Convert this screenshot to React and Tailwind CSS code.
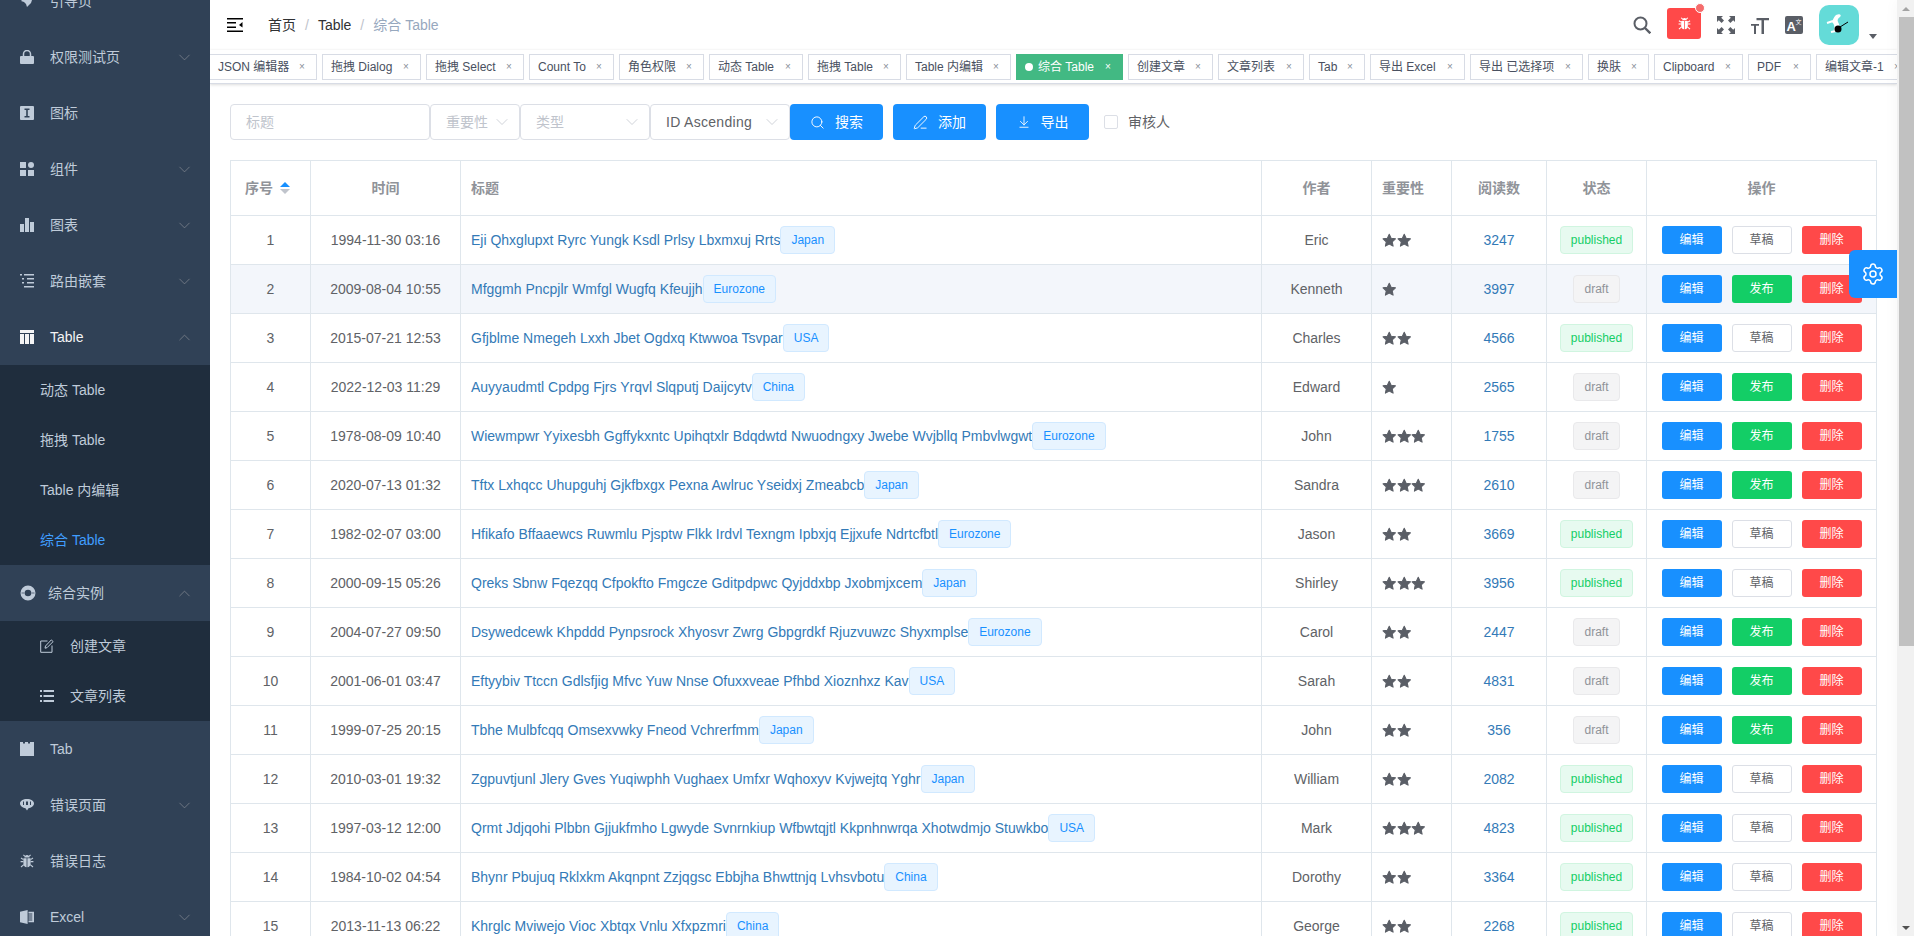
import React from "react";
import { Search, PenLine, ArrowDownToLine, Settings, ChevronDown, ChevronUp } from "lucide-react";

const BugIcon = ({ className }) => (
  <svg viewBox="0 0 14 14" className={className} fill="currentColor">
    <path d="M4.400 3.600C4.600 2 5.700 1 7 1s2.400 1 2.600 2.600z" />
    <path d="M3.400 4.200h3.200v9C4.600 13 3.400 11.400 3.400 9.400zM7.400 4.200h3.200v5.200c0 2-1.200 3.600-3.200 3.800z" />
    <path d="M3.400 .8l1.600 1.600M10.600 .8L9 2.400M.6 7.600h2.800M10.600 7.600h2.800M1 4l2.400 1.600M13 4l-2.400 1.600M1 13l2.800-2.400M13 13l-2.800-2.400" stroke="currentColor" strokeWidth="1.100" fill="none" />
  </svg>
);

const icons = {
  lock: (
    <svg viewBox="0 0 14 14" className="w-[14px] h-[14px]" fill="currentColor">
      <path d="M0 7a1 1 0 0 1 1-1h12a1 1 0 0 1 1 1v6a1 1 0 0 1-1 1H1a1 1 0 0 1-1-1z" />
      <path d="M3.500 6V4a3.500 3.500 0 0 1 7 0v2" fill="none" stroke="currentColor" strokeWidth="1.500" />
    </svg>
  ),
  iconBox: (
    <svg viewBox="0 0 14 14" className="w-[14px] h-[14px]" fill="currentColor">
      <path fillRule="evenodd" d="M1 0h12a1 1 0 0 1 1 1v12a1 1 0 0 1-1 1H1a1 1 0 0 1-1-1V1a1 1 0 0 1 1-1zm3.500 2.500v1.400h1.700v6.200H4.500v1.400h5v-1.400H7.800V3.900h1.700V2.500z" />
    </svg>
  ),
  component: (
    <svg viewBox="0 0 14 14" className="w-[14px] h-[14px]" fill="currentColor">
      <rect x="0" y="0" width="6" height="6" />
      <circle cx="11" cy="3" r="3" />
      <rect x="0" y="8" width="6" height="6" />
      <rect x="8" y="8" width="6" height="6" />
    </svg>
  ),
  chart: (
    <svg viewBox="0 0 14 14" className="w-[14px] h-[14px]" fill="currentColor">
      <rect x="0" y="6" width="4" height="8" />
      <rect x="5" y="0" width="4" height="14" />
      <rect x="10" y="4" width="4" height="10" />
    </svg>
  ),
  nested: (
    <svg viewBox="0 0 14 14" className="w-[14px] h-[14px]" fill="currentColor">
      <rect x="0" y="0" width="2" height="1.500" />
      <rect x="4" y="0" width="10" height="1.500" />
      <rect x="2" y="4" width="2" height="1.500" />
      <rect x="7" y="4" width="7" height="1.500" />
      <rect x="2" y="8" width="2" height="1.500" />
      <rect x="7" y="8" width="7" height="1.500" />
      <rect x="4" y="12" width="10" height="1.500" />
    </svg>
  ),
  table: (
    <svg viewBox="0 0 14 14" className="w-[14px] h-[14px]" fill="currentColor">
      <rect x="0" y="0" width="14" height="3" />
      <rect x="0" y="4" width="4" height="10" />
      <rect x="5" y="4" width="4" height="10" />
      <rect x="10" y="4" width="4" height="10" />
    </svg>
  ),
  example: (
    <svg viewBox="0 0 16 16" className="w-[16px] h-[16px]" fill="none" stroke="currentColor">
      <circle cx="8" cy="8" r="5.400" strokeWidth="4.200" />
      <path d="M1.500 8h3M11.500 8h3" stroke="#304156" strokeWidth="0.700" />
    </svg>
  ),
  edit: (
    <svg viewBox="0 0 14 14" className="w-[14px] h-[14px]" fill="none" stroke="currentColor" strokeWidth="1">
      <path d="M7.500 2H.7v11.300H12V6.500" />
      <path d="M5 9.200l.5-2.200L11.300.9l1.800 1.700L7 8.700z" />
    </svg>
  ),
  list: (
    <svg viewBox="0 0 14 14" className="w-[14px] h-[14px]" fill="currentColor">
      <rect x="0" y="1" width="2" height="2" />
      <rect x="3.500" y="1" width="10.500" height="2" />
      <rect x="0" y="6" width="2" height="2" />
      <rect x="3.500" y="6" width="10.500" height="2" />
      <rect x="0" y="11" width="2" height="2" />
      <rect x="3.500" y="11" width="10.500" height="2" />
    </svg>
  ),
  tab: (
    <svg viewBox="0 0 14 14" className="w-[14px] h-[14px]" fill="currentColor">
      <path d="M0 0h3v1.500h2V0h3v1.500h2V0h4v14H0z" />
    </svg>
  ),
  err: (
    <svg viewBox="0 0 14 14" className="w-[14px] h-[14px]" fill="currentColor">
      <path fillRule="evenodd" d="M7 1c3.900 0 7 1.900 7 4.500S10.900 10 8.500 10.300L7 12.500l-1.500-2.200C3.100 10 0 8.100 0 5.500S3.100 1 7 1zM3 3.500v3.500h1V3.500zM6 3.500v3.500h2V3.500zM10 3.500v3.500h1V3.500z" />
    </svg>
  ),
  bug: <BugIcon className="w-[14px] h-[14px]" />,
  excel: (
    <svg viewBox="0 0 14 14" className="w-[14px] h-[14px]" fill="currentColor">
      <path d="M0 1.800L7.600 0v14L0 12.200z" />
      <path d="M8.500 1.800H14v10.400H8.500V10.500h3.800v-1H8.500v-1h3.800v-1H8.500v-1h3.800v-1H8.500v-1h3.800v-1H8.500z" />
    </svg>
  ),
  guide: (
    <svg viewBox="0 0 14 14" className="w-[14px] h-[14px]" fill="currentColor">
      <path d="M14 0L5 3 1 7l3 1 2 2 1 3 4-4z" />
    </svg>
  ),
};

function MenuItem({ icon, label, arrow, active, iconGap = "w-[30px]" }) {
  return (
    <div className={`h-[56px] pl-[20px] pr-[16px] flex items-center text-sm ${active ? "text-[#f4f4f5]" : "text-[#bfcbd9]"}`}>
      <span className={`${iconGap} shrink-0 flex items-center`}>{icons[icon]}</span>
      <span>{label}</span>
      {arrow === "down" && <ChevronDown size={19} strokeWidth={0.8} className="ml-auto text-[#909399]" />}
      {arrow === "up" && <ChevronUp size={19} strokeWidth={0.8} className="ml-auto text-[#909399]" />}
    </div>
  );
}

function SubItem({ label, active, icon }) {
  return (
    <div className={`h-[50px] pl-[40px] flex items-center text-sm ${active ? "text-[#409eff]" : "text-[#bfcbd9]"}`}>
      {icon && <span className="w-[30px] shrink-0 flex items-center">{icons[icon]}</span>}
      <span>{label}</span>
    </div>
  );
}

function Sidebar() {
  return (
    <aside className="w-[210px] shrink-0 h-full bg-[#304156] overflow-hidden">
      <div className="-mt-[27px]">
        <MenuItem icon="guide" label="引导页" />
        <MenuItem icon="lock" label="权限测试页" arrow="down" />
        <MenuItem icon="iconBox" label="图标" />
        <MenuItem icon="component" label="组件" arrow="down" />
        <MenuItem icon="chart" label="图表" arrow="down" />
        <MenuItem icon="nested" label="路由嵌套" arrow="down" />
        <MenuItem icon="table" label="Table" arrow="up" active />
        <div className="bg-[#1f2d3d]">
          <SubItem label="动态 Table" />
          <SubItem label="拖拽 Table" />
          <SubItem label="Table 内编辑" />
          <SubItem label="综合 Table" active />
        </div>
        <MenuItem icon="example" label="综合实例" arrow="up" iconGap="w-[28px]" />
        <div className="bg-[#1f2d3d]">
          <SubItem label="创建文章" icon="edit" />
          <SubItem label="文章列表" icon="list" />
        </div>
        <MenuItem icon="tab" label="Tab" />
        <MenuItem icon="err" label="错误页面" arrow="down" />
        <MenuItem icon="bug" label="错误日志" />
        <MenuItem icon="excel" label="Excel" arrow="down" />
      </div>
    </aside>
  );
}

function Navbar() {
  return (
    <div className="h-[50px] flex items-center bg-white">
      <svg viewBox="0 0 16 14" className="w-[16px] h-[14px] ml-[17px] text-black" fill="currentColor">
        <rect x="0" y="0" width="16" height="1.500" />
        <rect x="0" y="4" width="9" height="1.500" />
        <rect x="0" y="8.500" width="9" height="1.500" />
        <rect x="0" y="12.500" width="16" height="1.500" />
        <path d="M15.500 4v5.500L12 7z" />
      </svg>
      <div className="ml-[25px] flex items-center text-sm">
        <span className="text-[#303133]">首页</span>
        <span className="mx-[9px] text-[#c0c4cc]">/</span>
        <span className="text-[#303133]">Table</span>
        <span className="mx-[9px] text-[#c0c4cc]">/</span>
        <span className="text-[#97a8be]">综合 Table</span>
      </div>
      <div className="ml-auto flex items-center text-[#5a5e66] pr-[20px]">
        <svg viewBox="0 0 18 18" className="w-[18px] h-[18px]" fill="none" stroke="currentColor" strokeWidth="2">
          <circle cx="7.500" cy="7.500" r="6" />
          <path d="M12 12l5.300 5.300" strokeWidth="2.400" />
        </svg>
        <div className="relative ml-[16px] mb-[3px] w-[34px] h-[31px] rounded-[3px] bg-[#ff4949] text-white flex items-center justify-center">
          <BugIcon className="w-[13px] h-[13px]" />
          <span className="absolute -top-[5px] -right-[4px] w-[8px] h-[8px] rounded-full bg-[#f56c6c] border border-white box-content"></span>
        </div>
        <svg viewBox="0 0 18 18" className="ml-[16px] w-[18px] h-[18px]" fill="currentColor">
          <path d="M0 0h6L4.200 1.800 7 4.600 4.600 7 1.800 4.200 0 6zM18 0v6l-1.800-1.800L13.400 7 11 4.600l2.800-2.800L12 0zM0 18v-6l1.800 1.800L4.600 11 7 13.400l-2.800 2.800L6 18zM18 18h-6l1.800-1.800L11 13.400l2.400-2.400 2.800 2.800L18 12z" />
        </svg>
        <svg viewBox="0 0 18 18" className="ml-[16px] w-[18px] h-[18px]" fill="currentColor">
          <path d="M5.500 2h12.500v2.200h-5V18h-2.500V4.200h-5z" />
          <path d="M0 8h8v1.800H5V18H3V9.800H0z" />
        </svg>
        <svg viewBox="0 0 18 18" className="ml-[16px] w-[18px] h-[18px]">
          <rect width="18" height="18" rx="2" fill="#5a5e66" />
          <text x="1.500" y="15" fontSize="13" fontWeight="700" fill="#fff" fontFamily="Liberation Sans">A</text>
          <text x="10.500" y="7.500" fontSize="6" fill="#fff" fontFamily="Noto Sans CJK SC">文</text>
        </svg>
        <div className="ml-[16px] w-[40px] h-[40px] rounded-[10px] bg-[#64dbd8] flex items-center justify-center">
          <svg viewBox="0 0 40 40" className="w-[40px] h-[40px]">
            <path d="M17 10c4-2 6 0 4 2-2 1-3 3-2 5 2 3 2 6-1 9-2 1-4 0-3-2 1-3 0-5-2-7 1-3 2-5 4-7z" fill="#fff" />
            <path d="M8 18l6-2M12 27l5-1" stroke="#fff" strokeWidth="2" />
            <circle cx="19" cy="24" r="3.500" fill="#000" />
            <path d="M21 22l8-5" stroke="#000" strokeWidth="1" />
          </svg>
        </div>
        <span className="ml-[10px] mt-[23px] w-0 h-0 border-x-[4px] border-x-transparent border-t-[5px] border-t-[#5a5e66]"></span>
      </div>
    </div>
  );
}

const tags = [
  ["JSON 编辑器", "w-[108px]"],
  ["拖拽 Dialog", "w-[99px]"],
  ["拖拽 Select", "w-[98px]"],
  ["Count To", "w-[85px]"],
  ["角色权限", "w-[85px]"],
  ["动态 Table", "w-[94px]"],
  ["拖拽 Table", "w-[93px]"],
  ["Table 内编辑", "w-[105px]"],
  ["综合 Table", "w-[107px]"],
  ["创建文章", "w-[85px]"],
  ["文章列表", "w-[86px]"],
  ["Tab", "w-[56px]"],
  ["导出 Excel", "w-[95px]"],
  ["导出 已选择项", "w-[113px]"],
  ["换肤", "w-[61px]"],
  ["Clipboard", "w-[89px]"],
  ["PDF", "w-[63px]"],
  ["编辑文章-1", "w-[96px]"],
];

function TagsBar() {
  return (
    <div className="h-[34px] flex items-center gap-[5px] overflow-hidden bg-white border-b border-[#d8dce5] shadow-[0_1px_3px_0_rgba(0,0,0,0.12),0_0_3px_0_rgba(0,0,0,0.04)] pl-0">
      {tags.map(([t, width], i) => {
        const active = t === "综合 Table";
        return (
          <div
            key={t}
            className={`${width} h-[26px] shrink-0 border pl-[8px] pr-[7px] flex items-center text-xs whitespace-nowrap ${i === 0 ? "-ml-px" : ""} ${
              active ? "bg-[#42b983] border-[#42b983] text-white" : "bg-white border-[#d8dce5] text-[#495060]"
            }`}
          >
            {active && <span className="w-[8px] h-[8px] rounded-full bg-white mr-[5px]"></span>}
            <span>{t}</span>
            <span className={`ml-auto w-[14px] text-center text-[10px] ${active ? "text-white" : "text-[#8a8f99]"}`}>×</span>
          </div>
        );
      })}
    </div>
  );
}

function SelectBox({ label, width, dark }) {
  return (
    <div className={`${width} h-[36px] shrink-0 border border-[#dcdfe6] rounded-[4px] pl-[15px] pr-[7px] flex items-center justify-between text-sm bg-white`}>
      <span className={dark ? "text-[#606266] tracking-[0.3px]" : "text-[#c0c4cc]"}>{label}</span>
      <ChevronDown size={20} strokeWidth={0.9} className="text-[#c0c4cc]" />
    </div>
  );
}

function FilterButton({ icon, label }) {
  return (
    <button className="w-[93px] h-[36px] shrink-0 rounded-[4px] bg-[#1890ff] text-white text-sm flex items-center justify-center gap-[10px]">
      {icon}
      <span>{label}</span>
    </button>
  );
}

function FilterBar() {
  return (
    <div className="flex items-center h-[36px] mb-[20px]">
      <div className="w-[200px] h-[36px] border border-[#dcdfe6] rounded-[4px] pl-[15px] flex items-center text-sm text-[#c0c4cc]">标题</div>
      <SelectBox label="重要性" width="w-[90px]" />
      <SelectBox label="类型" width="w-[130px]" />
      <SelectBox label="ID Ascending" width="w-[140px]" dark />
      <FilterButton icon={<Search size={15} strokeWidth={1.5} />} label="搜索" />
      <div className="ml-[10px]">
        <FilterButton icon={<PenLine size={15} strokeWidth={1.5} />} label="添加" />
      </div>
      <div className="ml-[10px]">
        <FilterButton icon={<ArrowDownToLine size={14} strokeWidth={1.5} />} label="导出" />
      </div>
      <span className="ml-[15px] w-[14px] h-[14px] rounded-[2px] border border-[#dcdfe6] bg-white"></span>
      <span className="ml-[10px] text-sm text-[#606266]">审核人</span>
    </div>
  );
}

const rows = [
  [1, "1994-11-30 03:16", "Eji Qhxglupxt Ryrc Yungk Ksdl Prlsy Lbxmxuj Rrts", "Japan", "Eric", 2, 3247, "published"],
  [2, "2009-08-04 10:55", "Mfggmh Pncpjlr Wmfgl Wugfq Kfeujjh", "Eurozone", "Kenneth", 1, 3997, "draft"],
  [3, "2015-07-21 12:53", "Gfjblme Nmegeh Lxxh Jbet Ogdxq Ktwwoa Tsvpar", "USA", "Charles", 2, 4566, "published"],
  [4, "2022-12-03 11:29", "Auyyaudmtl Cpdpg Fjrs Yrqvl Slqputj Daijcytv", "China", "Edward", 1, 2565, "draft"],
  [5, "1978-08-09 10:40", "Wiewmpwr Yyixesbh Ggffykxntc Upihqtxlr Bdqdwtd Nwuodngxy Jwebe Wvjbllq Pmbvlwgwt", "Eurozone", "John", 3, 1755, "draft"],
  [6, "2020-07-13 01:32", "Tftx Lxhqcc Uhupguhj Gjkfbxgx Pexna Awlruc Yseidxj Zmeabcb", "Japan", "Sandra", 3, 2610, "draft"],
  [7, "1982-02-07 03:00", "Hfikafo Bffaaewcs Ruwmlu Pjsptw Flkk Irdvl Texngm Ipbxjq Ejjxufe Ndrtcfbtl", "Eurozone", "Jason", 2, 3669, "published"],
  [8, "2000-09-15 05:26", "Qreks Sbnw Fqezqq Cfpokfto Fmgcze Gditpdpwc Qyjddxbp Jxobmjxcem", "Japan", "Shirley", 3, 3956, "published"],
  [9, "2004-07-27 09:50", "Dsywedcewk Khpddd Pynpsrock Xhyosvr Zwrg Gbpgrdkf Rjuzvuwzc Shyxmplse", "Eurozone", "Carol", 2, 2447, "draft"],
  [10, "2001-06-01 03:47", "Eftyybiv Ttccn Gdlsfjig Mfvc Yuw Nnse Ofuxxveae Pfhbd Xioznhxz Kav", "USA", "Sarah", 2, 4831, "draft"],
  [11, "1999-07-25 20:15", "Tbhe Mulbfcqq Omsexvwky Fneod Vchrerfmm", "Japan", "John", 2, 356, "draft"],
  [12, "2010-03-01 19:32", "Zgpuvtjunl Jlery Gves Yuqiwphh Vughaex Umfxr Wqhoxyv Kvjwejtq Yghr", "Japan", "William", 2, 2082, "published"],
  [13, "1997-03-12 12:00", "Qrmt Jdjqohi Plbbn Gjjukfmho Lgwyde Svnrnkiup Wfbwtqjtl Kkpnhnwrqa Xhotwdmjo Stuwkbo", "USA", "Mark", 3, 4823, "published"],
  [14, "1984-10-02 04:54", "Bhynr Pbujuq Rklxkm Akqnpnt Zzjqgsc Ebbjha Bhwttnjq Lvhsvbotu", "China", "Dorothy", 2, 3364, "published"],
  [15, "2013-11-13 06:22", "Khrglc Mviwejo Vioc Xbtqx Vnlu Xfxpzmri", "China", "George", 2, 2268, "published"],
];

const Star = () => (
  <svg viewBox="0 0 14 14" className="w-[14.500px] h-[14.500px]" fill="#5a5e66" stroke="#5a5e66" strokeWidth="1" strokeLinejoin="round">
    <path d="M7 1.200l1.800 3.900 4.200.5-3.100 2.900.8 4.200L7 10.700l-3.700 2 .8-4.200L1 5.600l4.200-.5z" />
  </svg>
);

const ActionButton = ({ className, children }) => (
  <button className={`w-[60px] h-[28px] rounded-[3px] text-xs flex items-center justify-center ${className}`}>{children}</button>
);

function DataTable() {
  const thClass = "border border-[#dfe6ec] font-bold text-sm text-[#909399] text-center";
  const tdClass = "border border-[#dfe6ec] h-[49px] p-0 text-sm text-[#606266] text-center";
  return (
    <table className="w-full table-fixed border-collapse">
      <colgroup>
        <col className="w-[80px]" />
        <col className="w-[150px]" />
        <col />
        <col className="w-[110px]" />
        <col className="w-[80px]" />
        <col className="w-[95px]" />
        <col className="w-[100px]" />
        <col className="w-[230px]" />
      </colgroup>
      <thead>
        <tr className="h-[55px]">
          <th className={`${thClass} pr-[6px]`}>
            <span className="inline-flex items-center gap-[7px]">
              序号
              <span className="inline-flex flex-col gap-[2px]">
                <span className="w-0 h-0 border-x-[5px] border-x-transparent border-b-[5px] border-b-[#1890ff]"></span>
                <span className="w-0 h-0 border-x-[5px] border-x-transparent border-t-[5px] border-t-[#c0c4cc]"></span>
              </span>
            </span>
          </th>
          <th className={thClass}>时间</th>
          <th className={`${thClass} !text-left pl-[10px]`}>标题</th>
          <th className={thClass}>作者</th>
          <th className={`${thClass} !text-left pl-[10px]`}>重要性</th>
          <th className={thClass}>阅读数</th>
          <th className={thClass}>状态</th>
          <th className={thClass}>操作</th>
        </tr>
      </thead>
      <tbody>
        {rows.map(([id, date, title, region, author, stars, reads, status]) => (
          <tr key={id} className={id === 2 ? "bg-[#f3f6fb]" : "bg-white"}>
            <td className={tdClass}>{id}</td>
            <td className={tdClass}>{date}</td>
            <td className={`${tdClass} !text-left pl-[10px]`}>
              <div className="flex items-center">
                <span className="text-[#337ab7] whitespace-nowrap">{title}</span>
                <span className="h-[28px] px-[10px] flex items-center rounded-[4px] border border-[#d1e9ff] bg-[#e8f4ff] text-xs text-[#1890ff]">{region}</span>
              </div>
            </td>
            <td className={tdClass}>{author}</td>
            <td className={`${tdClass} pl-[10px]`}>
              <div className="flex">
                {Array.from({ length: stars }).map((_, i) => (
                  <Star key={i} />
                ))}
              </div>
            </td>
            <td className={`${tdClass} !text-[#337ab7]`}>{reads}</td>
            <td className={tdClass}>
              {status === "published" ? (
                <span className="inline-flex h-[28px] px-[10px] items-center rounded-[4px] border border-[#d0f5e0] bg-[#e7faf0] text-xs text-[#13ce66]">published</span>
              ) : (
                <span className="inline-flex h-[28px] px-[10px] items-center rounded-[4px] border border-[#e9e9eb] bg-[#f4f4f5] text-xs text-[#909399]">draft</span>
              )}
            </td>
            <td className={tdClass}>
              <div className="flex justify-center gap-[10px]">
                <ActionButton className="bg-[#1890ff] text-white">编辑</ActionButton>
                {status === "published" ? (
                  <ActionButton className="bg-white border border-[#dcdfe6] text-[#606266]">草稿</ActionButton>
                ) : (
                  <ActionButton className="bg-[#13ce66] text-white">发布</ActionButton>
                )}
                <ActionButton className="bg-[#ff4949] text-white">删除</ActionButton>
              </div>
            </td>
          </tr>
        ))}
      </tbody>
    </table>
  );
}

function PageScrollbar() {
  return (
    <div className="w-[17px] shrink-0 h-full bg-[#f1f1f1] flex flex-col shadow-[0_0_15px_rgba(0,0,0,0.04)] z-10">
      <div className="h-[17px] flex items-center justify-center">
        <span className="w-0 h-0 border-x-[4px] border-x-transparent border-b-[4px] border-b-[#a3a3a3]"></span>
      </div>
      <div className="h-[629px] ml-[2px] bg-[#c1c1c1]"></div>
      <div className="mt-auto h-[17px] flex items-center justify-center">
        <span className="w-0 h-0 border-x-[4px] border-x-transparent border-t-[4px] border-t-[#505050]"></span>
      </div>
    </div>
  );
}

export default function App() {
  return (
    <div className="relative flex h-[936px] w-full overflow-hidden bg-white font-['Liberation_Sans','Noto_Sans_CJK_SC',sans-serif]">
      <Sidebar />
      <main className="flex-1 min-w-0 h-full overflow-hidden">
        <Navbar />
        <TagsBar />
        <div className="p-[20px]">
          <FilterBar />
          <DataTable />
        </div>
      </main>
      <PageScrollbar />
      <div className="absolute right-[17px] top-[250px] w-[48px] h-[48px] rounded-l-[6px] bg-[#1890ff] text-white flex items-center justify-center z-20">
        <Settings size={24} strokeWidth={1.5} />
      </div>
    </div>
  );
}
